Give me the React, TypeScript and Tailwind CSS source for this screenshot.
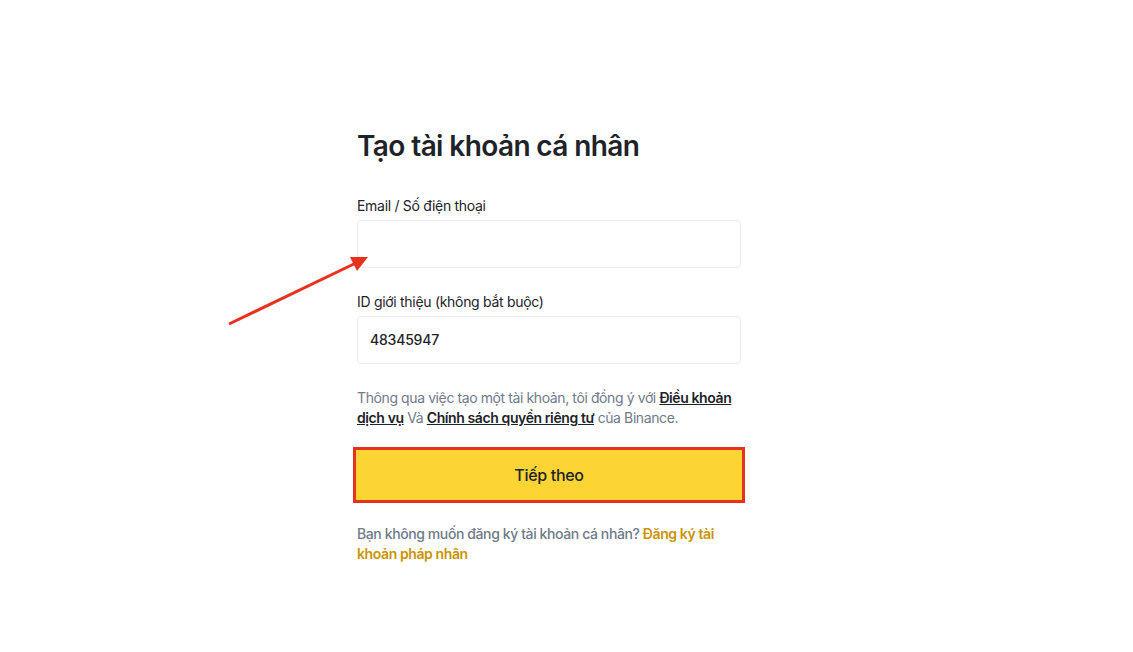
import React from "react"

const font = { fontFamily: "Inter, 'Noto Sans', sans-serif" }

function Arrow() {
  return (
    <svg
      className="pointer-events-none absolute left-0 top-0"
      width="1133"
      height="652"
      viewBox="0 0 1133 652"
    >
      <line x1="229" y1="324" x2="358" y2="262" stroke="#E8321E" strokeWidth="3" />
      <polygon points="368,257 350,257 357,271" fill="#E8321E" />
    </svg>
  )
}

export default function App() {
  return (
    <div className="relative min-h-[652px] w-full bg-white" style={font}>
      <div className="pl-[357px] pt-[128px]">
        <div className="flex w-[384px] flex-col">
          <h1 className="text-[28px] font-semibold leading-[36px] tracking-[-0.6px] text-[#1E2329]">
            Tạo tài khoản cá nhân
          </h1>

          {/* Email */}
          <label className="mt-8 text-sm leading-5 tracking-[-0.3px] text-[#1E2329]">Email / Số điện thoại</label>
          <div className="mt-1 h-12 rounded border border-[#EAECEF] bg-white" />

          {/* Referral */}
          <label className="mt-6 text-sm leading-5 tracking-[-0.3px] text-[#1E2329]">
            ID giới thiệu (không bắt buộc)
          </label>
          <div className="mt-1 flex h-12 items-center rounded border border-[#EAECEF] bg-white px-3 text-sm font-medium tracking-[-0.2px] text-[#1E2329]">
            48345947
          </div>

          <p className="mt-6 text-sm leading-5 tracking-[-0.4px] text-[#707A8A]">
            Thông qua việc tạo một tài khoản, tôi đồng ý với{" "}
            <a className="font-semibold text-[#1E2329] underline">Điều khoản dịch vụ</a> Và{" "}
            <a className="font-semibold text-[#1E2329] underline">Chính sách quyền riêng tư</a> của Binance.
          </p>

          <div className="-mx-1 mt-[19px] border-[3px] border-[#E8321E]">
            <button className="flex h-[50px] w-full items-center justify-center bg-[#FCD535] text-base font-medium tracking-[-0.3px] text-[#1E2329]">
              Tiếp theo
            </button>
          </div>

          <p className="mt-[21px] text-sm font-medium leading-5 tracking-[-0.4px] text-[#707A8A]">
            Bạn không muốn đăng ký tài khoản cá nhân?{" "}
            <a className="font-semibold text-[#C99400]">Đăng ký tài khoản pháp nhân</a>
          </p>
        </div>
      </div>
      <Arrow />
    </div>
  )
}
